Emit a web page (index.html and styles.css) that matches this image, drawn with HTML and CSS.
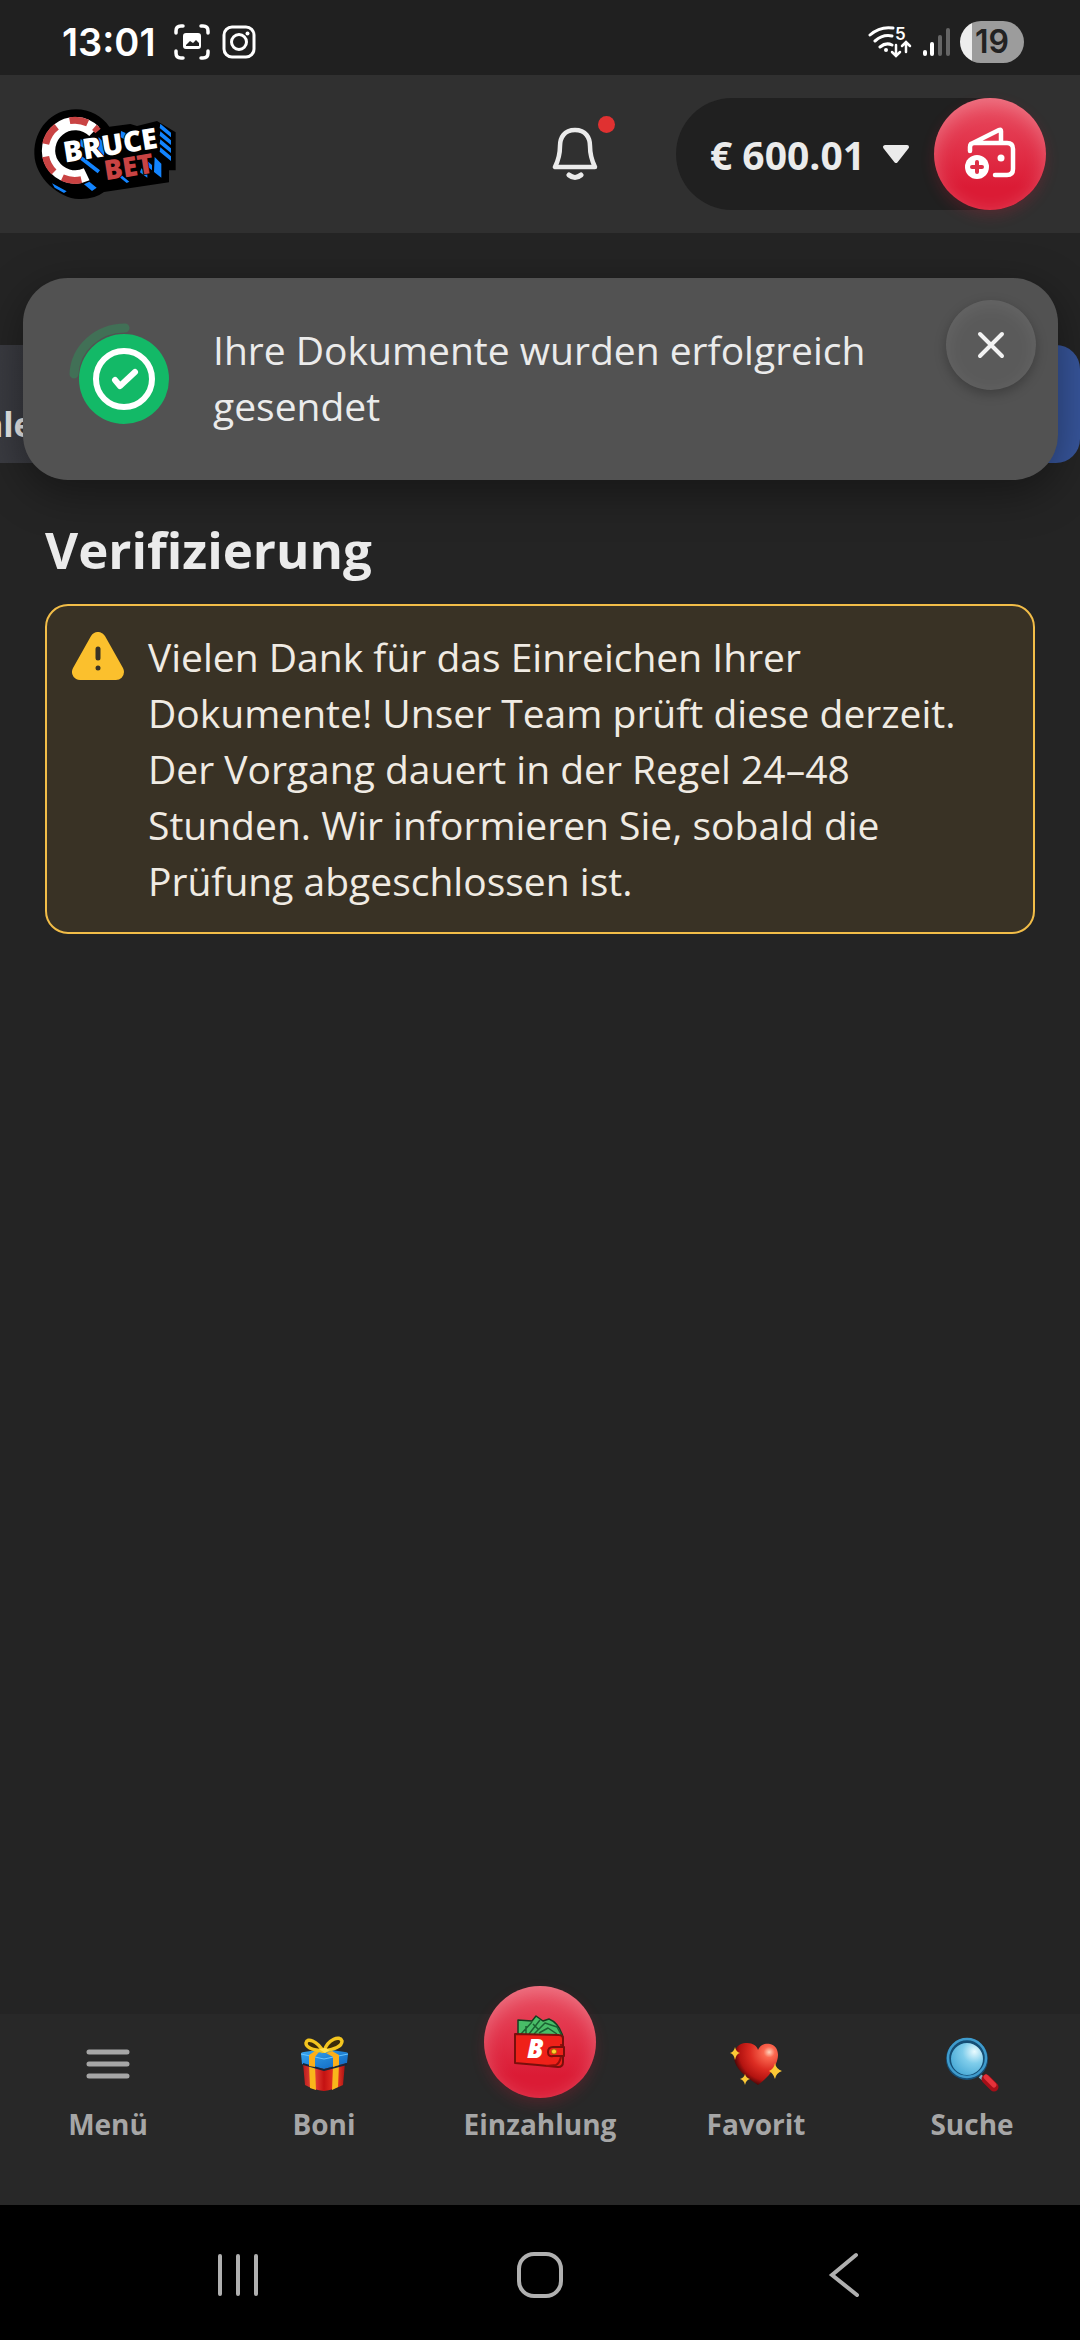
FILE: index.html
```
<!DOCTYPE html>
<html lang="de">

<head>
  <meta charset="utf-8">
  <meta name="viewport" content="width=device-width, initial-scale=1">
  <title>Verifizierung</title>
  <link rel="stylesheet" href="styles.css">
</head>

<body>
  <div class="status-bar">
    <span class="time">13:01</span>
    <svg class="status-icon" width="36" height="36" viewBox="0 0 36 36" fill="none" stroke="#fff" stroke-width="3.500" stroke-linecap="round">
      <path d="M2 9V7q0-5 5-5h2M27 2h2q5 0 5 5v2M34 27v2q0 5-5 5h-2M9 34H7q-5 0-5-5v-2" />
      <path d="M12 9h12q3 0 3 3v10q0 3-3 3H12q-3 0-3-3V12q0-3 3-3zM12 21l4-4 3 2 3-3 3 3v3H12z" fill="#fff" fill-rule="evenodd" stroke="none" />
    </svg>
    <svg class="status-icon" width="34" height="34" viewBox="0 0 34 34" fill="none" stroke="#fff" stroke-width="3">
      <rect x="2" y="2" width="30" height="30" rx="8" />
      <circle cx="17" cy="17" r="7.500" />
      <circle cx="25.500" cy="8.500" r="2" fill="#fff" stroke="none" />
    </svg>
    <div class="status-right">
      <svg width="44" height="34" viewBox="0 0 44 34" fill="none" stroke="#fff" stroke-width="3" stroke-linecap="round">
        <path d="M2 10Q12 1 25 3M7 16q8-7 17-5M12 22q6-5 12-2" />
        <circle cx="18" cy="25" r="2" fill="#fff" stroke="none" />
        <path d="M28 20v10M24 27l4 4 4-4M38 27V18M34 21l4-4 4 4" stroke-width="2.500" />
        <text x="27" y="15" class="wifi-gen">5</text>
      </svg>
      <svg width="28" height="30" viewBox="0 0 28 30">
        <rect x="1" y="23" width="4" height="6" rx="2" fill="#fff" />
        <rect x="8" y="15" width="4" height="14" rx="2" fill="#fff" />
        <rect x="16" y="8" width="4" height="21" rx="2" fill="#656565" />
        <rect x="24" y="1" width="4" height="28" rx="2" fill="#656565" />
      </svg>
      <span class="battery">19</span>
    </div>
  </div>

  <header class="header">
    <a class="logo" href="#" aria-label="BruceBet">
      <svg width="144" height="94" viewBox="36 50 432 282">
        <path d="M168 57c42 0 78 20 100 52l63-8 20 6 60-15 56 34v114h-20v36l-195 29q-30 23-76 21C118 324 44 262 43 190 42 118 93 57 168 57z" fill="#000" />
        <!-- casino chip -->
        <g fill="none">
          <path d="M222 123A80 80 0 1 0 200 252" stroke="#fff" stroke-width="40" />
          <path d="M149 91A90 90 0 0 1 203 98M223 111A90 90 0 0 1 234 122M77 161A90 90 0 0 1 110 109M77 199A90 90 0 0 0 102 245M127 262A90 90 0 0 0 184 268" stroke="#c94343" stroke-width="21" />
        </g>
        <!-- drop shadow of the letters -->
        <g fill="#1284ff">
          <path d="M96 279l44 24-8 5-28-16zM192 282l16-8 22 18-14 10zM176 190l64 50-7 9-56-44z" />
          <path d="M421 100l32 27v14l-34-28zM421 123l32 27v14l-34-28zM421 147l32 27v14l-34-28zM421 171l32 27v14l-34-28z" />
          <path d="M404 200l20 20v42l-22-17zM372 204l24 20v16l-24-20zM364 234l18 14v14l-22-16zM304 254l24 20-8 4-22-18z" />
          <path d="M182 146l14 10v20l-16-10zM236 140l18 20-2 40-20-20zM303 122l14 6-2 20-14-8z" />
        </g>
        <g class="logo-text" transform="rotate(-9 138 215)">
          <text x="135" y="216" font-size="86" fill="#fff">BRUCE</text>
          <text x="247" y="288" font-size="82" fill="#c94343">BET</text>
        </g>
      </svg>
    </a>
    <div class="header-actions">
      <button class="bell" aria-label="Benachrichtigungen">
        <svg width="46" height="54" viewBox="0 0 46 54" fill="none" stroke="#ebebeb" stroke-linecap="round" stroke-linejoin="round">
          <path d="M23 3C12 3 8 11 8 19c0 10-2 15-5 21h40c-3-6-5-11-5-21C38 11 34 3 23 3z" stroke-width="4.500" />
          <path d="M17 48q6 5 12 0" stroke-width="5" />
        </svg>
        <span class="dot"></span>
      </button>
      <div class="balance">
        <button class="amount">€ 600.01
          <svg width="28" height="20" viewBox="0 0 28 20">
            <path d="M3 3h22L14 17z" fill="#ebebeb" stroke="#ebebeb" stroke-width="4" stroke-linejoin="round" />
          </svg>
        </button>
        <button class="round-red" aria-label="Einzahlung">
          <svg width="52" height="54" viewBox="0 0 52 54" fill="none" stroke="#fff" stroke-width="4.500" stroke-linecap="round" stroke-linejoin="round">
            <path d="M6 24v-4q0-4 4-4h33q6 0 6 6v20q0 6-6 6H31M9 16L35 3q2-1 2 1v11" />
            <circle cx="37" cy="31" r="3.500" fill="#fff" stroke="none" />
            <circle cx="13" cy="40" r="12" fill="#fff" stroke="none" />
            <path d="M13 35v10M8 40h10" stroke="#dc2f46" stroke-width="4" />
          </svg>
        </button>
      </div>
    </div>
  </header>

  <div class="toast" role="status">
    <div class="toast-icon">
      <svg width="102" height="102" viewBox="0 0 102 102" fill="none" stroke-linecap="round" stroke-linejoin="round">
        <path d="M5 51A51 48 0 0 1 56 5" stroke="#417056" stroke-width="9" />
        <circle cx="55" cy="56" r="45" fill="#13b967" />
        <circle cx="55" cy="56" r="28" stroke="#fff" stroke-width="6" />
        <path d="M46 57l5 6 15-14" stroke="#fff" stroke-width="6" />
      </svg>
    </div>
    <p class="toast-text">Ihre Dokumente wurden erfolgreich gesendet</p>
    <button class="toast-close" aria-label="Schließen">
      <svg width="28" height="28" viewBox="0 0 28 28" stroke="#f2f2f2" stroke-width="4" stroke-linecap="round">
        <path d="M3 3l22 22M25 3L3 25" />
      </svg>
    </button>
  </div>

  <main class="content">
    <nav class="tabs">
      <a class="tab" href="#">Einzahlen</a>
      <a class="tab tab-active" href="#" aria-label="Verifizierung"></a>
    </nav>

    <section class="verification">
      <h1>Verifizierung</h1>
      <div class="alert">
        <svg class="alert-icon" width="52" height="48" viewBox="0 0 52 48">
          <path d="M26 8L8 40h36z" fill="#fbc02d" stroke="#fbc02d" stroke-width="16" stroke-linejoin="round" />
          <path d="M26 17v9" stroke="#393225" stroke-width="5" stroke-linecap="round" />
          <circle cx="26" cy="36" r="2.500" fill="#393225" />
        </svg>
        <p>Vielen Dank für das Einreichen Ihrer Dokumente! Unser Team prüft diese derzeit. Der Vorgang dauert in der Regel 24–48 Stunden. Wir informieren Sie, sobald die Prüfung abgeschlossen ist.</p>
      </div>
    </section>
  </main>

  <nav class="bottom-nav">
    <button class="nav-item">
      <svg class="nav-icon" width="56" height="56" viewBox="0 0 56 56" stroke="#a6a6a6" stroke-width="5" stroke-linecap="round">
        <path d="M9 16h38M9 28h38M9 40h38" />
      </svg>
      <span>Menü</span>
    </button>
    <button class="nav-item">
      <svg class="nav-icon" width="56" height="56" viewBox="0 0 56 56">
        <defs>
          <linearGradient id="box" x2="1" y2="0">
            <stop offset="0" stop-color="#b91a1a" />
            <stop offset=".25" stop-color="#e8493c" />
            <stop offset=".5" stop-color="#c41212" />
            <stop offset=".8" stop-color="#ee3b26" />
            <stop offset="1" stop-color="#a81212" />
          </linearGradient>
          <linearGradient id="lid" x2="1" y2="1">
            <stop offset="0" stop-color="#38a9f2" />
            <stop offset="1" stop-color="#0d62bd" />
          </linearGradient>
        </defs>
        <path d="M7 27l21 6 21-6-2 22q-10 5-19 6-10-1-19-6z" fill="url(#box)" />
        <path d="M13 28l6 2 1 24-6-2zM37 30l6-2-1 23-6 3z" fill="#f9b61b" />
        <path d="M5 18q0-2 3-2l20-3 21 3q3 0 3 2l-1 9-23 6-22-5z" fill="url(#lid)" />
        <path d="M5 18l23 5 24-5" fill="none" stroke="#66c4ff" />
        <path d="M28 33l23-6v2l-23 6-21-6v-2z" fill="#14263c" />
        <path d="M13 19l6-4 4 1-4 5v10l-6-1zM36 15l7 4v10l-6 2V21l-7-4z" fill="#fcae18" />
        <path d="M27 15C21 5 11 1 10 7c0 5 7 7 17 8zM28 15C32 3 44-1 46 5c0 6-8 8-18 10z" fill="#3b2b0a" stroke="#f3c51f" stroke-width="3.500" />
        <path d="M23 13l6-1 5 2-5 3z" fill="#ffe04d" />
      </svg>
      <span>Boni</span>
    </button>
    <button class="nav-item">
      <span class="round-red nav-deposit">
        <svg width="56" height="56" viewBox="0 0 56 56" stroke-linejoin="round">
          <path d="M6 22V6l14 1 4-5 7 5 6-2q10 4 14 18v9z" fill="#48bd67" stroke="#143f20" stroke-width="1.500" />
          <path d="M9 20L20 8M17 20L28 6M14 20V12M22 20l11-11 12 4 5 9M27 19l9-5 9 6M21 10l5 5" fill="none" stroke="#1b6332" stroke-width="1.500" />
          <path d="M3 20l44 1q4 0 4 4v23q0 5-5 5l-20-2-23-2z" fill="#ef2119" stroke="#790f0c" stroke-width="2" />
          <path d="M49 30q2 17-5 21l-10 1" fill="none" stroke="#920f0c" stroke-width="2" />
          <path d="M52 33H41q-5 0-5 5t5 4h11z" fill="#ef2119" stroke="#790f0c" stroke-width="2" />
          <circle cx="42" cy="37.500" r="2.500" fill="#ffcf2e" stroke="#9b6a00" stroke-width=".8" />
          <text x="15" y="44" class="wallet-letter">B</text>
        </svg>
      </span>
      <span>Einzahlung</span>
    </button>
    <button class="nav-item">
      <svg class="nav-icon" width="56" height="56" viewBox="0 0 56 56">
        <defs>
          <radialGradient id="heart" cx=".8" cy=".22" r=".85">
            <stop offset="0" stop-color="#ffd5bd" />
            <stop offset=".15" stop-color="#fb6850" />
            <stop offset=".5" stop-color="#dc2c22" />
            <stop offset=".8" stop-color="#b31310" />
            <stop offset="1" stop-color="#300505" />
          </radialGradient>
        </defs>
        <path d="M30 49C18 41 7 33 6 22 5 12 12 6 19 7c6 0 10 3 11 7 2-5 7-7 12-6 6 1 10 8 7 17-3 10-12 19-19 24z" fill="url(#heart)" />
        <path d="M7 11q1 5 5 6-4 1-5 7-1-6-5-7 4-1 5-6zM47 27q1 6 7 8-6 2-7 8-2-6-6-8 5-2 6-8zM17 38q1 4 5 5-4 1-5 6-1-5-5-6 4-1 5-5z" fill="#fcc936" />
      </svg>
      <span>Favorit</span>
    </button>
    <button class="nav-item">
      <svg class="nav-icon" width="56" height="56" viewBox="0 0 56 56">
        <defs>
          <radialGradient id="glass" cx=".7" cy=".3" r=".8">
            <stop offset="0" stop-color="#e9fbff" />
            <stop offset=".4" stop-color="#7fcdeb" />
            <stop offset="1" stop-color="#3fa3d2" />
          </radialGradient>
        </defs>
        <path d="M36 40l6 5" stroke="#78afc8" stroke-width="4" />
        <path d="M42 43l8 8" stroke="#a40f18" stroke-width="9" stroke-linecap="round" />
        <path d="M42 41l8 8" stroke="#e5323a" stroke-width="5" stroke-linecap="round" />
        <circle cx="23" cy="23" r="18.500" fill="url(#glass)" stroke="#154e75" stroke-width="5" />
        <circle cx="23" cy="22" r="19" fill="none" stroke="#3f9bcc" stroke-width="2.500" />
      </svg>
      <span>Suche</span>
    </button>
  </nav>

  <div class="system-nav">
    <button aria-label="Letzte Apps">
      <svg width="48" height="48" viewBox="0 0 48 48" stroke="#b0b0b0" stroke-width="4" stroke-linecap="round">
        <path d="M6 5v38M24 5v38M42 5v38" />
      </svg>
    </button>
    <button aria-label="Startseite">
      <svg width="48" height="48" viewBox="0 0 48 48" fill="none" stroke="#b0b0b0" stroke-width="4">
        <rect x="3" y="3" width="42" height="42" rx="15" />
      </svg>
    </button>
    <button aria-label="Zurück">
      <svg width="48" height="48" viewBox="0 0 48 48" fill="none" stroke="#b0b0b0" stroke-width="4" stroke-linecap="round">
        <path d="M38 4L14 24l25 20" />
      </svg>
    </button>
  </div>
</body>

</html>
```
FILE: styles.css
```
* {
  box-sizing: border-box;
}

body {
  display: flex;
  flex-direction: column;
  min-height: 100vh;
  margin: 0;
  position: relative;
  background: #242424;
  color: #ebebeb;
  font-family: "Open Sans", "Noto Sans", sans-serif;
}

button {
  padding: 0;
  border: 0;
  background: none;
  color: inherit;
  font-family: inherit;
  cursor: pointer;
}

a {
  color: inherit;
  text-decoration: none;
}

svg {
  display: block;
  flex-shrink: 0;
}

/* Status bar */
.status-bar {
  display: flex;
  align-items: center;
  gap: 12px;
  height: 75px;
  padding: 8px 56px 0 62px;
  background: #202020;
  color: #fff;
  font-family: Inter, Roboto, sans-serif;
}

.time {
  margin-right: 6px;
  font-size: 38px;
  font-weight: 600;
}

.status-right {
  display: flex;
  align-items: center;
  gap: 10px;
  margin-left: auto;
}

.wifi-gen {
  fill: #fff;
  stroke: none;
  font-size: 17px;
  font-weight: 600;
}

.battery {
  width: 64px;
  border-radius: 21px;
  background: linear-gradient(90deg, #ededed 12px, #9c9c9c 12px);
  color: #222;
  font-size: 32px;
  font-weight: 600;
  line-height: 42px;
  text-align: center;
}

/* Header */
.header {
  display: flex;
  align-items: center;
  justify-content: space-between;
  height: 158px;
  padding: 0 34px 0 32px;
  background: #303030;
}

.logo-text {
  font-family: "Open Sans", sans-serif;
  font-weight: 800;
  stroke: #000;
  stroke-width: 5px;
  paint-order: stroke;
}

.header-actions {
  display: flex;
  align-items: center;
  gap: 78px;
}

.bell {
  position: relative;
}

.dot {
  position: absolute;
  top: -11px;
  right: -17px;
  width: 17px;
  height: 17px;
  border-radius: 50%;
  background: #e03131;
}

.balance {
  display: flex;
  align-items: center;
  gap: 24px;
  padding-left: 34px;
  border-radius: 56px;
  background: #202020;
}

.amount {
  display: flex;
  align-items: center;
  gap: 17px;
  font-size: 39px;
  font-weight: 700;
}

.round-red {
  display: flex;
  align-items: center;
  justify-content: center;
  width: 112px;
  height: 112px;
  border-radius: 50%;
  background: linear-gradient(#e94d61, #db1b35 80%);
  box-shadow: inset 0 6px 20px rgba(255, 255, 255, 0.25), 0 6px 14px rgba(219, 27, 53, 0.2);
}

/* Toast */
.toast {
  position: absolute;
  z-index: 10;
  top: 278px;
  left: 23px;
  right: 22px;
  display: flex;
  align-items: flex-start;
  padding: 22px;
  border-radius: 45px;
  background: #525252;
  box-shadow: 0 12px 45px rgba(0, 0, 0, 0.4);
}

.toast-icon {
  padding: 23px 0 33px 24px;
}

.toast-text {
  flex: 1;
  margin: 22px 20px 0 42px;
  font-size: 39px;
  line-height: 56px;
}

.toast-close {
  display: flex;
  align-items: center;
  justify-content: center;
  width: 90px;
  height: 90px;
  border-radius: 50%;
  background: #5a5a5a;
  box-shadow: inset 0 4px 20px rgba(255, 255, 255, 0.08), 0 4px 12px rgba(0, 0, 0, 0.25);
}

/* Content */
.content {
  flex: 1;
  padding-top: 112px;
}

.tabs {
  display: flex;
  height: 118px;
  overflow: hidden;
}

.tab {
  width: 360px;
  /* row is scrolled to its end */
  margin-left: -136px;
  padding: 56px 0 0 28px;
  background: linear-gradient(90deg, #3e3f45, #34353b);
  font-size: 34px;
  font-weight: 700;
  line-height: 46px;
}

.tab-active {
  flex: 1;
  margin-left: 16px;
  border-radius: 24px;
  background: #37559b;
}

.verification {
  padding: 58px 45px;
}

h1 {
  margin: 0 0 27px;
  font-size: 51px;
  font-weight: 700;
  line-height: 56px;
}

.alert {
  display: flex;
  align-items: flex-start;
  gap: 24px;
  padding: 23px 25px;
  border: 2px solid #f2bd48;
  border-radius: 23px;
  background: #393225;
  color: #f0ebe3;
}

.alert-icon {
  margin-top: 3px;
}

.alert p {
  margin: 0;
  font-size: 39px;
  line-height: 56px;
}

/* Bottom navigation */
.bottom-nav {
  display: flex;
  height: 191px;
  padding-top: 22px;
  background: #282828;
}

.nav-item {
  display: flex;
  flex: 1;
  flex-direction: column;
  align-items: center;
  gap: 12px;
  color: #a6a6a6;
  font-size: 28px;
  font-weight: 700;
  line-height: 40px;
}

.nav-deposit {
  margin: -50px 0 -6px;
}

.wallet-letter {
  fill: #fff;
  font-size: 26px;
  font-weight: 800;
  font-style: italic;
}

/* System navigation */
.system-nav {
  display: flex;
  align-items: center;
  justify-content: space-between;
  height: 135px;
  padding: 4px 214px 0;
  background: #000;
}
```
